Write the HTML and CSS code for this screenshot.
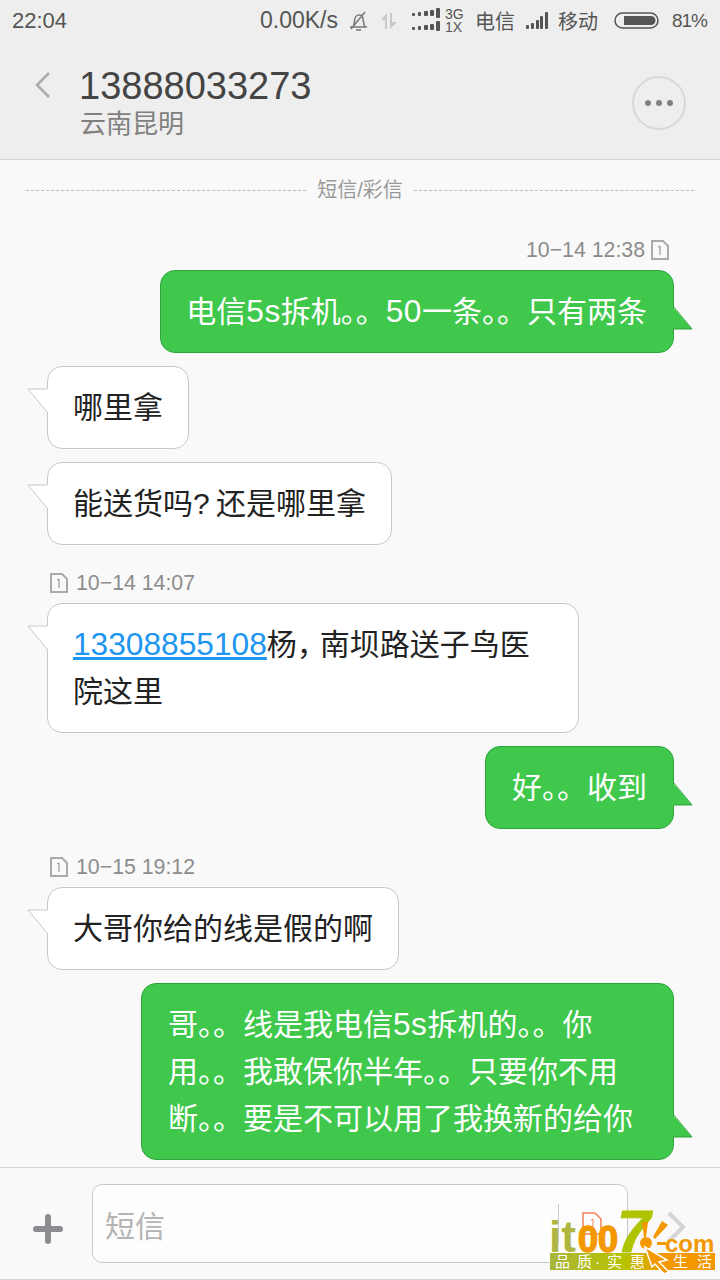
FILE: index.html

```html
<!DOCTYPE html>
<html lang="zh-CN">
<head>
  <meta charset="UTF-8" />
  <meta name="viewport" content="width=device-width, initial-scale=1.0"/>
  <title>13888033273</title>
  <link rel="stylesheet" href="styles.css">
</head>
<body>
  <header class="top">
    <div class="status">
      <span class="clock">22:04</span>
      <span class="speed">0.00K/s</span>
      <svg class="ic-bell" width="19" height="20" viewBox="0 0 19 20"><path d="M1 16h17M4 16c2-3 1-6 2-9 1-3 5-4 7-2 1.500 2 1 7 3 11M2 18L16 1M7 19h5" fill="none" stroke="#777" stroke-width="1.500"/></svg>
      <svg class="ic-arrows" width="18" height="18" viewBox="0 0 18 18"><path d="M7 1v16H5V8H1zM10 17V1h2v9h5z" fill="#c8c8c8"/></svg>
      <svg class="ic-dots" width="28" height="25" viewBox="0 0 28 25"><g fill="#555"><rect x="0" y="5" width="3" height="3" rx="1"/><rect x="6" y="4" width="3" height="4" rx="1"/><rect x="12" y="3" width="4" height="5" rx="1"/><rect x="18" y="2" width="4" height="6" rx="1"/><rect x="24" y="0" width="4" height="10" rx="1"/><rect x="0" y="19" width="3" height="3" rx="1"/><rect x="6" y="18" width="3" height="4" rx="1"/><rect x="12" y="17" width="4" height="5" rx="1"/><rect x="18" y="16" width="4" height="6" rx="1"/><rect x="24" y="13" width="4" height="10" rx="1"/></g></svg>
      <span class="net"><span>3G</span><span>1X</span></span>
      <span class="carrier carrier-a">电信</span>
      <svg class="ic-signal" width="22" height="18" viewBox="0 0 22 18"><g fill="#555"><rect x="0" y="13" width="3" height="4" rx="1"/><rect x="5" y="11" width="3" height="6" rx="1"/><rect x="10" y="8" width="3" height="9" rx="1"/><rect x="14" y="4" width="3" height="13" rx="1"/><rect x="19" y="0" width="3" height="17" rx="1"/></g></svg>
      <span class="carrier carrier-b">移动</span>
      <svg class="ic-batt" width="45" height="17" viewBox="0 0 45 17"><rect x="1" y="1" width="43" height="15" rx="7.500" fill="none" stroke="#555" stroke-width="1.500"/><path d="M10 4h27a4.500 4.500 0 0 1 0 9H10z" fill="#555"/></svg>
      <span class="pct">81%</span>
    </div>
    <div class="nav">
      <svg class="back" width="17" height="28" viewBox="0 0 17 28"><path d="M15 2L3 14l12 12" fill="none" stroke="#aaa" stroke-width="2.500"/></svg>
      <div class="who">
        <div class="who-num">13888033273</div>
        <div class="who-loc">云南昆明</div>
      </div>
      <div class="more"><i></i><i></i><i></i></div>
    </div>
  </header>

  <main class="thread">
    <div class="divider"><span class="dash"></span><span class="divider-txt">短信/彩信</span><span class="dash"></span></div>

    <div class="stamp stamp-out first">
      <span>10−14 12:38</span>
      <svg class="sim" width="18" height="20" viewBox="0 0 18 20"><path d="M1 1h11l5 5v13H1z" fill="none" stroke="#aaa" stroke-width="2"/><path d="M7 7l2-1v9" fill="none" stroke="#888"/></svg>
    </div>
    <div class="msg msg-out msg-first">
      电信<span class="num">5s</span>拆机。。<span class="num">50</span>一条。。只有两条
      <svg class="tail tail-out" width="21" height="26" viewBox="0 0 21 26"><path d="M0 0l20 23H0z" fill="#40c84c"/><path d="M1 0l19 23H1" fill="none" stroke="#2ea53c"/></svg>
    </div>

    <div class="msg msg-in">
      哪里拿
      <svg class="tail tail-in" width="21" height="26" viewBox="0 0 21 26"><path d="M21 1H1l19 23h1z" fill="#fff"/><path d="M20 1H1l19 23" fill="none" stroke="#c8c8c8"/></svg>
    </div>
    <div class="msg msg-in">
      能送货吗<span class="q">? </span>还是哪里拿
      <svg class="tail tail-in" width="21" height="26" viewBox="0 0 21 26"><path d="M21 1H1l19 23h1z" fill="#fff"/><path d="M20 1H1l19 23" fill="none" stroke="#c8c8c8"/></svg>
    </div>

    <div class="stamp stamp-in">
      <svg class="sim" width="18" height="20" viewBox="0 0 18 20"><path d="M1 1h11l5 5v13H1z" fill="none" stroke="#aaa" stroke-width="2"/><path d="M7 7l2-1v9" fill="none" stroke="#888"/></svg>
      <span>10−14 14:07</span>
    </div>
    <div class="msg msg-in msg-wide">
      <a class="link">13308855108</a>杨<span class="comma">，</span>南坝路送子鸟医<br>院这里
      <svg class="tail tail-in" width="21" height="26" viewBox="0 0 21 26"><path d="M21 1H1l19 23h1z" fill="#fff"/><path d="M20 1H1l19 23" fill="none" stroke="#c8c8c8"/></svg>
    </div>

    <div class="msg msg-out">
      好。。收到
      <svg class="tail tail-out" width="21" height="26" viewBox="0 0 21 26"><path d="M0 0l20 23H0z" fill="#40c84c"/><path d="M1 0l19 23H1" fill="none" stroke="#2ea53c"/></svg>
    </div>

    <div class="stamp stamp-in">
      <svg class="sim" width="18" height="20" viewBox="0 0 18 20"><path d="M1 1h11l5 5v13H1z" fill="none" stroke="#aaa" stroke-width="2"/><path d="M7 7l2-1v9" fill="none" stroke="#888"/></svg>
      <span>10−15 19:12</span>
    </div>
    <div class="msg msg-in">
      大哥你给的线是假的啊
      <svg class="tail tail-in" width="21" height="26" viewBox="0 0 21 26"><path d="M21 1H1l19 23h1z" fill="#fff"/><path d="M20 1H1l19 23" fill="none" stroke="#c8c8c8"/></svg>
    </div>
    <div class="msg msg-out msg-long">
      哥。。线是我电信<span class="num">5s</span>拆机的。。你<br>用。。我敢保你半年。。只要你不用<br>断。。要是不可以用了我换新的给你
      <svg class="tail tail-out tail-low" width="21" height="26" viewBox="0 0 21 26"><path d="M0 0l20 23H0z" fill="#40c84c"/><path d="M1 0l19 23H1" fill="none" stroke="#2ea53c"/></svg>
    </div>
  </main>

  <footer class="bottom">
    <svg class="plus" width="30" height="30" viewBox="0 0 30 30"><path d="M15 3v24M3 15h24" stroke="#8c8c90" stroke-width="6" stroke-linecap="round"/></svg>
    <div class="field">
      <span class="hint">短信</span>
      <span class="caret"></span>
      <svg class="send-sim" width="20" height="23" viewBox="0 0 20 23"><path d="M1 1h12l6 6v15H1z" fill="none" stroke="#f2805a" stroke-width="1.500"/><path d="M9 8l2-1v9" fill="none" stroke="#f2805a"/></svg>
    </div>
    <svg class="send-arrow" width="20" height="34" viewBox="0 0 20 34"><path d="M3 3l14 14L3 31" fill="none" stroke="#d4d4d4" stroke-width="4"/></svg>
  </footer>

  <!-- watermark stamped over the corner -->
  <svg class="mark" width="170" height="90" viewBox="0 -10 170 90">
    <defs>
      <linearGradient id="strip" x1="0" x2="1" y1="0" y2="0">
        <stop offset="0" stop-color="#a9b53c"/>
        <stop offset=".45" stop-color="#b8c400"/>
        <stop offset=".68" stop-color="#f39800"/>
        <stop offset="1" stop-color="#f39800"/>
      </linearGradient>
    </defs>
    <text class="mark-it" x="0" y="52">it</text>
    <text class="mark-00" x="29" y="52">00</text>
    <text class="mark-7" x="68" y="52">7</text>
    <g fill="#f39800">
      <path d="M93 22h6l-2 15h-2zM113 21l6 4-13 14-2-2zM108 42h9v3h-9z"/>
      <circle cx="97" cy="43" r="6"/>
    </g>
    <text class="mark-com" x="116" y="52">com</text>
    <rect x="1" y="53" width="165" height="17" fill="url(#strip)"/>
    <text class="mark-cn" x="6" y="67">品</text>
    <text class="mark-cn" x="28" y="67">质</text>
    <text class="mark-cn" x="46" y="67">·</text>
    <text class="mark-cn" x="58" y="67">实</text>
    <text class="mark-cn" x="81" y="67">惠</text>
    <text class="mark-cn" x="124" y="67">生</text>
    <text class="mark-cn" x="148" y="67">活</text>
    <path d="M96 47l22 13-8 2 10 10-5 2-9-10-3 3z" fill="#f39800" stroke="#fff" stroke-width="1.500"/>
  </svg>
</body>
</html>
```

FILE: styles.css

```css
html, body {
  margin: 0;
  height: 1280px;
  overflow: hidden;
}
body {
  position: relative;
  display: flex;
  flex-direction: column;
  background: #f9f9f9;
  font-family: "Liberation Sans", "Noto Sans CJK SC", sans-serif;
  color: #222;
}

/* top bar */
.top {
  height: 159px;
  background: #eeeeee;
  border-bottom: 1px solid #d6d6d6;
  flex: none;
}
.status {
  height: 41px;
  display: flex;
  align-items: center;
  padding: 0 13px 0 12px;
  color: #555;
}
.clock { font-size: 22px; }
.speed { font-size: 23px; margin-left: auto; }
.ic-bell { margin-left: 11px; }
.ic-arrows { margin-left: 12px; }
.ic-dots { margin-left: 14px; }
.net {
  margin-left: 5px;
  width: 18px;
  display: flex;
  flex-direction: column;
  font-size: 14px;
  line-height: 13px;
}
.carrier { font-size: 20px; }
.carrier-a { margin-left: 12px; }
.ic-signal { margin-left: 11px; }
.carrier-b { margin-left: 10px; }
.ic-batt { margin-left: 16px; }
.pct { font-size: 19px; letter-spacing: -1px; margin-left: 13px; }

.nav {
  height: 118px;
  display: flex;
  align-items: flex-start;
}
.back { margin: 30px 0 0 34px; flex: none; }
.who { margin-left: 28px; }
.who-num {
  font-size: 38px;
  line-height: 44px;
  margin-top: 23px;
  color: #444;
}
.who-loc {
  font-size: 26px;
  line-height: 32px;
  margin-left: 1px;
  color: #808080;
}
.more {
  margin: 35px 34px 0 auto;
  width: 50px;
  height: 50px;
  border: 2px solid #d8d8d8;
  border-radius: 50%;
  display: flex;
  align-items: center;
  justify-content: center;
  gap: 5px;
}
.more i {
  width: 6px;
  height: 6px;
  border-radius: 50%;
  background: #808080;
}

/* messages */
.thread {
  flex: 1;
  min-height: 0;
  overflow: hidden;
  display: flex;
  flex-direction: column;
}
.divider {
  display: flex;
  align-items: center;
  gap: 11px;
  padding: 16px 26px 0;
  height: 28px;
  flex: none;
}
.dash {
  flex: 1;
  border-top: 1px dashed #bbb;
}
.divider-txt {
  font-size: 20px;
  line-height: 28px;
  color: #999;
}
.stamp {
  display: flex;
  align-items: center;
  gap: 6px;
  height: 30px;
  flex: none;
  font-size: 21.3px;
  color: #8c8c8c;
}
.stamp.first { margin-top: 31px; }
.stamp-out { justify-content: flex-end; padding: 0 51px 0 0; margin-bottom: 5px; }
.stamp-in { padding-left: 50px; margin-top: 23px; margin-bottom: 5px; gap: 8px; }

.msg {
  position: relative;
  flex: none;
  width: fit-content;
  box-sizing: border-box;
  padding: 17px 25px;
  border-radius: 15px;
  border: 1px solid;
  font-size: 30px;
  line-height: 47px;
  white-space: nowrap;
}
.msg + .msg { margin-top: 13px; }
.msg-in {
  margin-left: 47px;
  background: #fff;
  border-color: #c8c8c8;
  color: #222;
}
.msg-out {
  margin-left: auto;
  margin-right: 46px;
  padding: 17px 26px;
  background: #40c84c;
  border-color: #2ea53c;
  color: #fff;
}
.msg-first { padding-left: 25px; }
.msg-wide { width: 532px; }
.msg-long { width: 533px; }
.num { font-size: 31.7px; letter-spacing: .5px; }
.link {
  color: #1e96f0;
  text-decoration: underline;
  font-size: 31.7px;
}
.comma { letter-spacing: -7px; }
.q { letter-spacing: -1px; }

.tail { position: absolute; }
.tail-out { right: -20px; top: 35px; }
.tail-low { top: 130px; }
.tail-in { left: -21px; top: 21px; }

/* input row */
.bottom {
  height: 111px;
  flex: none;
  background: #f9f9f9;
  border-top: 1px solid #d6d6d6;
  border-bottom: 1px solid #d6d6d6;
  display: flex;
  align-items: flex-start;
}
.plus { margin: 46px 0 0 33px; flex: none; }
.field {
  position: relative;
  margin: 16px 0 0 29px;
  width: 536px;
  height: 79px;
  box-sizing: border-box;
  background: #fdfdfd;
  border: 1px solid #c8c8c8;
  border-radius: 10px;
  display: flex;
  align-items: center;
  padding-left: 12px;
}
.hint {
  font-size: 30px;
  color: #b4b4b4;
}
.caret {
  position: absolute;
  left: 465px;
  top: 19px;
  width: 1px;
  height: 40px;
  background: #ccc;
}
.send-sim {
  position: absolute;
  left: 489px;
  top: 27px;
}
.send-arrow { margin: 42px 0 0 38px; flex: none; }

/* watermark */
.mark {
  position: absolute;
  left: 549px;
  top: 1190px;
}
.mark text { font-family: "Liberation Sans", "Noto Sans CJK SC", sans-serif; font-weight: 700; }
.mark-it { font-size: 44px; fill: #aeb540; }
.mark-00 { font-size: 36px; fill: #f39800; stroke: #f39800; stroke-width: 1.500px; }
.mark-7 { font-size: 60px; font-style: italic; fill: #afc400; stroke: #afc400; stroke-width: 1px; }
.mark-com { font-size: 24px; fill: #f39800; }
.mark .mark-cn { font-size: 15px; font-weight: 400; fill: #fff; }
```
